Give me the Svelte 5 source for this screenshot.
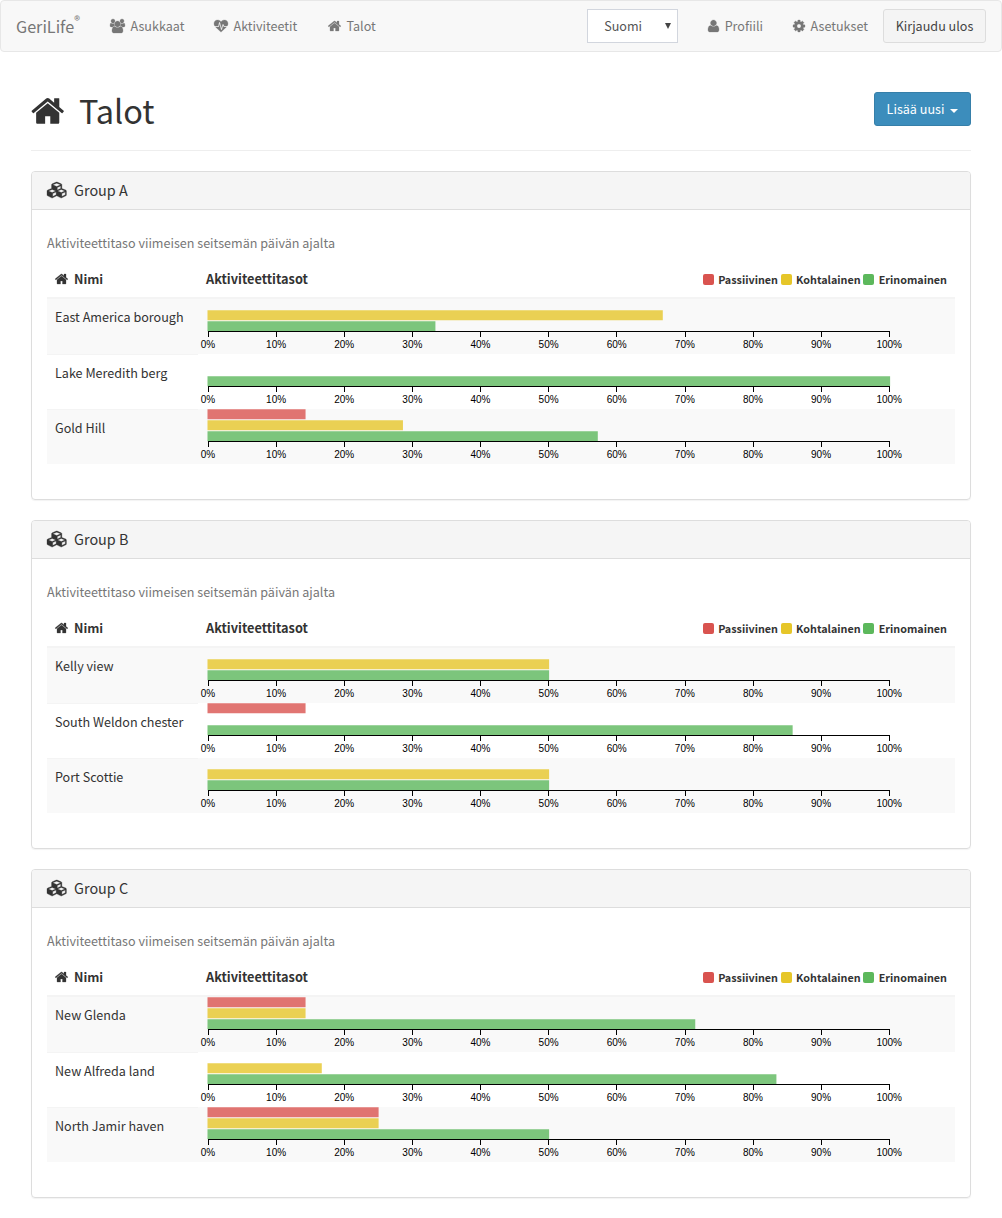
<script>
  const icons = {
    home: { box: '64 0 1664 1792', w: 13, d: 'M1472 992v480q0 26-19 45t-45 19h-384v-384h-256v384h-384q-26 0-45-19t-19-45v-480q0-1 .5-3t.5-3l575-474 575 474q1 2 1 6zm223-69l-62 74q-8 9-21 11h-3q-13 0-21-7l-692-577-692 577q-12 8-24 7-13-2-21-11l-62-74q-8-10-7-23.5t11-21.5l719-599q32-26 76-26t76 26l244 204v-195q0-14 9-23t23-9h192q14 0 23 9t9 23v408l219 182q10 8 11 21.5t-7 23.5z' },
    users: { box: '-64 0 1920 1792', w: 15, d: 'M529 896q-162 5-265 128h-134q-82 0-138-40.5t-56-118.5q0-353 124-353 6 0 43.5 21t97.5 42.5 119 21.5q67 0 133-23-5 37-5 66 0 139 81 256zm1071 637q0 120-73 189.5t-194 69.5h-874q-121 0-194-69.5t-73-189.5q0-53 3.5-103.5t14-109 26.5-108.5 43-97.5 62-81 85.5-53.5 111.5-20q10 0 43 21.5t73 48 107 48 135 21.5 135-21.5 107-48 73-48 43-21.5q61 0 111.5 20t85.5 53.5 62 81 43 97.5 26.5 108.5 14 109 3.5 103.5zm-1024-1277q0 106-75 181t-181 75-181-75-75-181 75-181 181-75 181 75 75 181zm704 384q0 159-112.5 271.5t-271.5 112.5-271.5-112.5-112.5-271.5 112.5-271.5 271.5-112.5 271.5 112.5 112.5 271.5zm576 225q0 78-56 118.5t-138 40.5h-134q-103-123-265-128 81-117 81-256 0-29-5-66 66 23 133 23 59 0 119-21.5t97.5-42.5 43.5-21q124 0 124 353zm-128-609q0 106-75 181t-181 75-181-75-75-181 75-181 181-75 181 75 75 181z' },
    heartbeat: { box: '0 0 1792 1792', w: 14, d: 'M1280 1024h305q-5 6-10 10.5t-9 7.5l-3 4-623 600q-18 18-44 18t-44-18l-624-602q-5-2-21-20h369q22 0 39.5-13.5t22.5-34.5l70-281 190 667q6 20 23 33t39 13q21 0 38-13t23-33l146-485 56 112q18 35 57 35zm512-428q0 145-103 300h-369l-111-221q-8-17-25.5-27t-36.5-8q-45 5-56 46l-129 430-196-686q-6-20-23.5-33t-39.5-13-39 13.5-22 34.5l-116 464h-423q-103-155-103-300 0-220 127-344t351-124q62 0 126.5 21.5t120 58 95.5 68.5 76 68q36-36 76-68t95.5-68.5 120-58 126.5-21.5q224 0 351 124t127 344z' },
    user: { box: '192 0 1408 1792', w: 11, d: 'M1600 1405q0 120-73 189.5t-194 69.5h-874q-121 0-194-69.5t-73-189.5q0-53 3.5-103.5t14-109 26.5-108.5 43-97.5 62-81 85.5-53.5 111.5-20q9 0 42 21.5t74.5 48 108 48 133.5 21.5 133.5-21.5 108-48 74.5-48 42-21.5q61 0 111.5 20t85.5 53.5 62 81 43 97.5 26.5 108.5 14 109 3.5 103.5zm-320-893q0 159-112.5 271.5t-271.5 112.5-271.5-112.5-112.5-271.5 112.5-271.5 271.5-112.5 271.5 112.5 112.5 271.5z' },
    cog: { box: '128 0 1536 1792', w: 12, d: 'M1152 896q0-106-75-181t-181-75-181 75-75 181 75 181 181 75 181-75 75-181zm512-109v222q0 12-8 23t-20 13l-185 28q-19 54-39 91 35 50 107 138 10 12 10 25t-9 23q-27 37-99 108t-94 71q-12 0-26-9l-138-108q-44 23-91 38-16 136-29 186-7 28-36 28h-222q-14 0-24.5-8.5t-11.5-21.5l-28-184q-49-16-90-37l-141 107q-10 9-25 9-14 0-25-11-126-114-165-168-7-10-7-23 0-12 8-23 15-21 51-66.5t54-70.5q-27-50-41-99l-183-27q-13-2-21-12.5t-8-23.5v-222q0-12 8-23t19-13l186-28q14-46 39-92-40-57-107-138-10-12-10-24 0-10 9-23 26-36 98.5-107.5t94.5-71.5q13 0 26 10l138 107q44-23 91-38 16-136 29-186 7-28 36-28h222q14 0 24.5 8.5t11.5 21.5l28 184q49 16 90 37l142-107q9-9 24-9 13 0 25 10 129 119 165 170 7 8 7 22 0 12-8 23-15 21-51 66.5t-54 70.5q26 50 41 98l183 28q13 2 21 12.5t8 23.5z' },
    cubes: { box: '0 0 2304 1792', w: 18, d: 'M640 1632l384-192v-314l-384 164v342zm-64-454l404-173-404-173-404 173zm1088 454l384-192v-314l-384 164v342zm-64-454l404-173-404-173-404 173zm-448-293l384-165v-266l-384 164v267zm-64-379l441-189-441-189-441 189zm1088 518v416q0 36-19 67t-52 47l-448 224q-25 14-57 14t-57-14l-448-224q-4-2-7-4-2 2-7 4l-448 224q-25 14-57 14t-57-14l-448-224q-33-16-52-47t-19-67v-416q0-38 21.5-70t56.5-48l434-186v-400q0-38 21.5-70t56.5-48l448-192q23-10 50-10t50 10l448 192q35 16 56.5 48t21.5 70v400l434 186q36 16 57 48t21 70z' }
  };

  const scale = 682;
  const ticks = [0, 10, 20, 30, 40, 50, 60, 70, 80, 90, 100];
  const levels = ['passive', 'moderate', 'excellent'];
  const legend = [
    ['passive', 'Passiivinen'],
    ['moderate', 'Kohtalainen'],
    ['excellent', 'Erinomainen']
  ];

  // Shares are percentages in the order passive, moderate, excellent.
  const groups = [
    { name: 'Group A', homes: [
      { name: 'East America borough', shares: [0, 66.67, 33.33] },
      { name: 'Lake Meredith berg', shares: [0, 0, 100] },
      { name: 'Gold Hill', shares: [14.29, 28.57, 57.14] }
    ] },
    { name: 'Group B', homes: [
      { name: 'Kelly view', shares: [0, 50, 50] },
      { name: 'South Weldon chester', shares: [14.29, 0, 85.71] },
      { name: 'Port Scottie', shares: [0, 50, 50] }
    ] },
    { name: 'Group C', homes: [
      { name: 'New Glenda', shares: [14.29, 14.29, 71.43] },
      { name: 'New Alfreda land', shares: [0, 16.67, 83.33] },
      { name: 'North Jamir haven', shares: [25, 25, 50] }
    ] }
  ];
</script>

{#snippet icon(name, size = 14)}
  <svg class="icon {name}" viewBox={icons[name].box} width={(icons[name].w * size) / 14} height={size} aria-hidden="true">
    <path d={icons[name].d} />
  </svg>
{/snippet}

<nav class="navbar">
  <a class="brand" href="#home">GeriLife<sup>®</sup></a>
  <a class="link residents" href="#residents">{@render icon('users')}<span>Asukkaat</span></a>
  <a class="link activities" href="#activities">{@render icon('heartbeat')}<span>Aktiviteetit</span></a>
  <a class="link" href="#homes">{@render icon('home')}<span>Talot</span></a>
  <div class="right">
    <div class="language"><span>Suomi</span><i></i></div>
    <a class="link profile" href="#profile">{@render icon('user')}<span>Profiili</span></a>
    <a class="link settings" href="#settings">{@render icon('cog')}<span>Asetukset</span></a>
    <button class="logout">Kirjaudu ulos</button>
  </div>
</nav>

<main>
  <header class="page-header">
    <h1>{@render icon('home', 36)}<span>Talot</span></h1>
    <button class="add">Lisää uusi<i></i></button>
  </header>

  {#each groups as group}
    <section class="panel">
      <h2>{@render icon('cubes', 16)}<span>{group.name}</span></h2>
      <div class="body">
        <p>Aktiviteettitaso viimeisen seitsemän päivän ajalta</p>
        <div class="head">
          <div class="name-head">{@render icon('home')}<span>Nimi</span></div>
          <div class="level-head">Aktiviteettitasot</div>
          <div class="legend">
            {#each legend as [level, label]}
              <span class="key"><i class={level}></i>{label}</span>
            {/each}
          </div>
        </div>
        {#each group.homes as home, index}
          <div class="row">
            <div class="name" class:first={index === 0}>{home.name}</div>
            <svg class="chart" width="757" height="55">
              <g transform="translate(9.5 0)">
                {#each home.shares as share, i}
                  {#if share}
                    <rect class="bar {levels[i]}" x="0" y={0.25 + i * 11} width={(share * scale) / 100 + 0.6} height="10" />
                  {/if}
                {/each}
                {#each ticks as tick}
                  <rect class="axis" x={Math.round(tick * 6.81 - 0.11)} y="32" width="1" height="6" transform="translate(.5 0)" />
                  <text x={tick * 6.812 + 0.5} y="49">{tick}%</text>
                {/each}
                <rect class="axis" x=".5" y="32" width="682" height="1" />
              </g>
            </svg>
          </div>
        {/each}
      </div>
    </section>
  {/each}
</main>

<style>
  :global(body) {
    background: #fff;
    color: #333;
    font-family: 'Noto Sans CJK SC', 'Open Sans', sans-serif;
    font-size: 12.59px;
    line-height: 20px;
  }
  a { color: #777; text-decoration: none; }
  .icon { display: block; flex: none; fill: currentColor; overflow: visible; }
  .icon.cubes, .link .icon, .name-head .icon { stroke: currentColor; stroke-width: 35; }
  .navbar {
    box-sizing: border-box;
    height: 52px;
    padding: 0 15px;
    display: flex;
    align-items: center;
    border: 1px solid #e7e7e7;
    border-radius: 4px;
    background: #f8f8f8;
    color: #777;
  }
  .brand { font-size: 16.2px; display: flex; width: 94px; }
  sup { font-size: 12px; line-height: 12px; margin-top: -2px; }
  .link { display: flex; align-items: center; gap: 5.5px; }
  .residents { width: 104px; }
  .activities { width: 114px; }
  .right { margin-left: auto; display: flex; align-items: center; }
  .language {
    box-sizing: border-box;
    width: 91px;
    height: 34px;
    padding: 0 6px 0 16px;
    margin-right: 30px;
    display: flex;
    align-items: center;
    justify-content: space-between;
    border: 1px solid #d2d6de;
    background: #fff;
    color: #555;
  }
  .language i { border: 3.5px solid transparent; border-top: 6px solid #444; border-bottom: 0; }
  .profile { margin-right: 30px; }
  .settings { margin-right: 15px; }
  button {
    box-sizing: border-box;
    height: 34px;
    padding: 0;
    border: 1px solid #ddd;
    border-radius: 3px;
    font: inherit;
  }
  .logout { width: 103px; background: #f4f4f4; color: #444; }
  main { padding: 40px 31px 0; }
  .page-header {
    box-sizing: border-box;
    height: 59px;
    margin-bottom: 20px;
    display: flex;
    justify-content: space-between;
    border-bottom: 1px solid #eee;
  }
  h1 { margin: -1px 0 0 -.5px; height: 40px; display: flex; align-items: center; gap: 15px; font-size: 32.5px; font-weight: 400; }
  h1 span { padding-bottom: 2px; }
  .add {
    width: 97px;
    display: flex;
    align-items: center;
    justify-content: center;
    gap: 6px;
    border-color: #367fa9;
    background: #3c8dbc;
    color: #fff;
  }
  .add i { border: 4px solid transparent; border-top-color: #fff; border-bottom: 0; margin-top: 3px; }
  .panel {
    box-sizing: border-box;
    height: 329px;
    margin-bottom: 20px;
    border: 1px solid #ddd;
    border-radius: 4px;
    box-shadow: 0 1px 1px rgba(0, 0, 0, .05);
  }
  h2 {
    box-sizing: border-box;
    margin: 0;
    height: 38px;
    padding: 0 0 2px 15px;
    display: flex;
    align-items: center;
    gap: 6.5px;
    border-bottom: 1px solid #ddd;
    border-radius: 3px 3px 0 0;
    background: #f5f5f5;
    font-size: 14.4px;
    font-weight: 400;
  }
  .body { padding: 23px 15px 0; }
  p { margin: 0 0 8px; color: #777; }
  .head { box-sizing: border-box; height: 38px; display: flex; border-bottom: 2px solid #f4f4f4; font-weight: 700; padding-top: 8px; }
  .name-head { width: 143px; padding-left: 8px; display: flex; height: 20px; align-items: center; gap: 6px; }
  .level-head { margin-left: 8px; font-size: 12.75px; }
  .legend { height: 21px; margin-left: auto; padding-right: 8px; display: flex; gap: 2.7px; font-size: 10.77px; }
  .key { display: flex; align-items: center; gap: 4.4px; }
  .key i { width: 11px; height: 11px; border-radius: 2px; }
  .key .passive { background: #d9534f; }
  .key .moderate { background: #e6c629; }
  .key .excellent { background: #5cb85c; }
  .row { height: 55px; display: flex; }
  .row:nth-child(odd) { background: #f9f9f9; }
  .name { box-sizing: border-box; width: 151px; padding: 8px; border-top: 1px solid #f4f4f4; }
  .name.first { border-top: 0; }
  .chart { display: block; }
  .bar { opacity: .8; }
  .bar.passive { fill: #d9534f; }
  .bar.moderate { fill: #e6c629; }
  .bar.excellent { fill: #5cb85c; }
  .axis { fill: #000; }
  text { font: 10px 'Liberation Sans', sans-serif; text-anchor: middle; fill: #000; }
</style>
